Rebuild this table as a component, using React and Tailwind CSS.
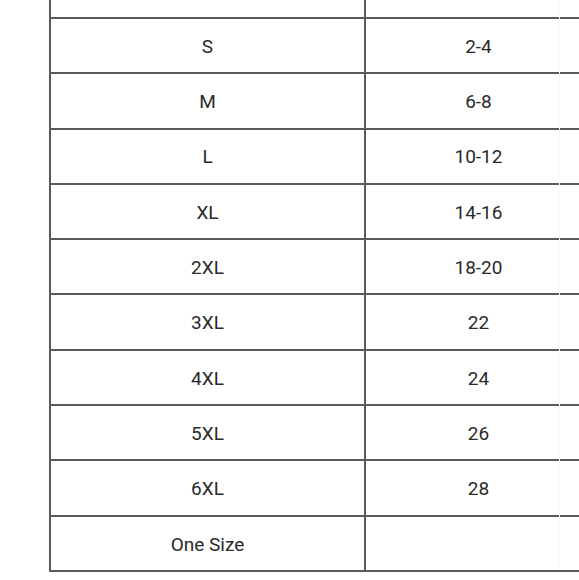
const rows = [
  ['S', '2-4'],
  ['M', '6-8'],
  ['L', '10-12'],
  ['XL', '14-16'],
  ['2XL', '18-20'],
  ['3XL', '22'],
  ['4XL', '24'],
  ['5XL', '26'],
  ['6XL', '28'],
  ['One Size', ''],
];

const App = () => (
  <div className="relative h-[580px] w-[579px] overflow-hidden bg-white font-['Roboto',sans-serif] text-[19px] text-[#2a2a2a]">
    <div className="pl-[49px]">
      <div className="w-[542px] border-l-2 border-[#5a5a5a]">
        <div className="flex h-[19px] border-b-2 border-[#5a5a5a]">
          <div className="w-[315px] border-r-2 border-[#5a5a5a]" />
          <div className="flex-1" />
        </div>
        {rows.map(([size, eu]) => (
          <div key={size} className="flex h-[55.3px] border-b-2 border-[#5a5a5a] pt-[3px]">
            <div className="flex w-[315px] items-center justify-center border-r-2 border-[#5a5a5a] -mt-[3px] pt-[3px]">
              {size}
            </div>
            <div className="flex flex-1 items-center justify-center">{eu}</div>
          </div>
        ))}
      </div>
    </div>
    <div className="absolute left-[559px] top-0 h-[570px] w-px bg-[#f9f9f9]" />
  </div>
);

export default App;
